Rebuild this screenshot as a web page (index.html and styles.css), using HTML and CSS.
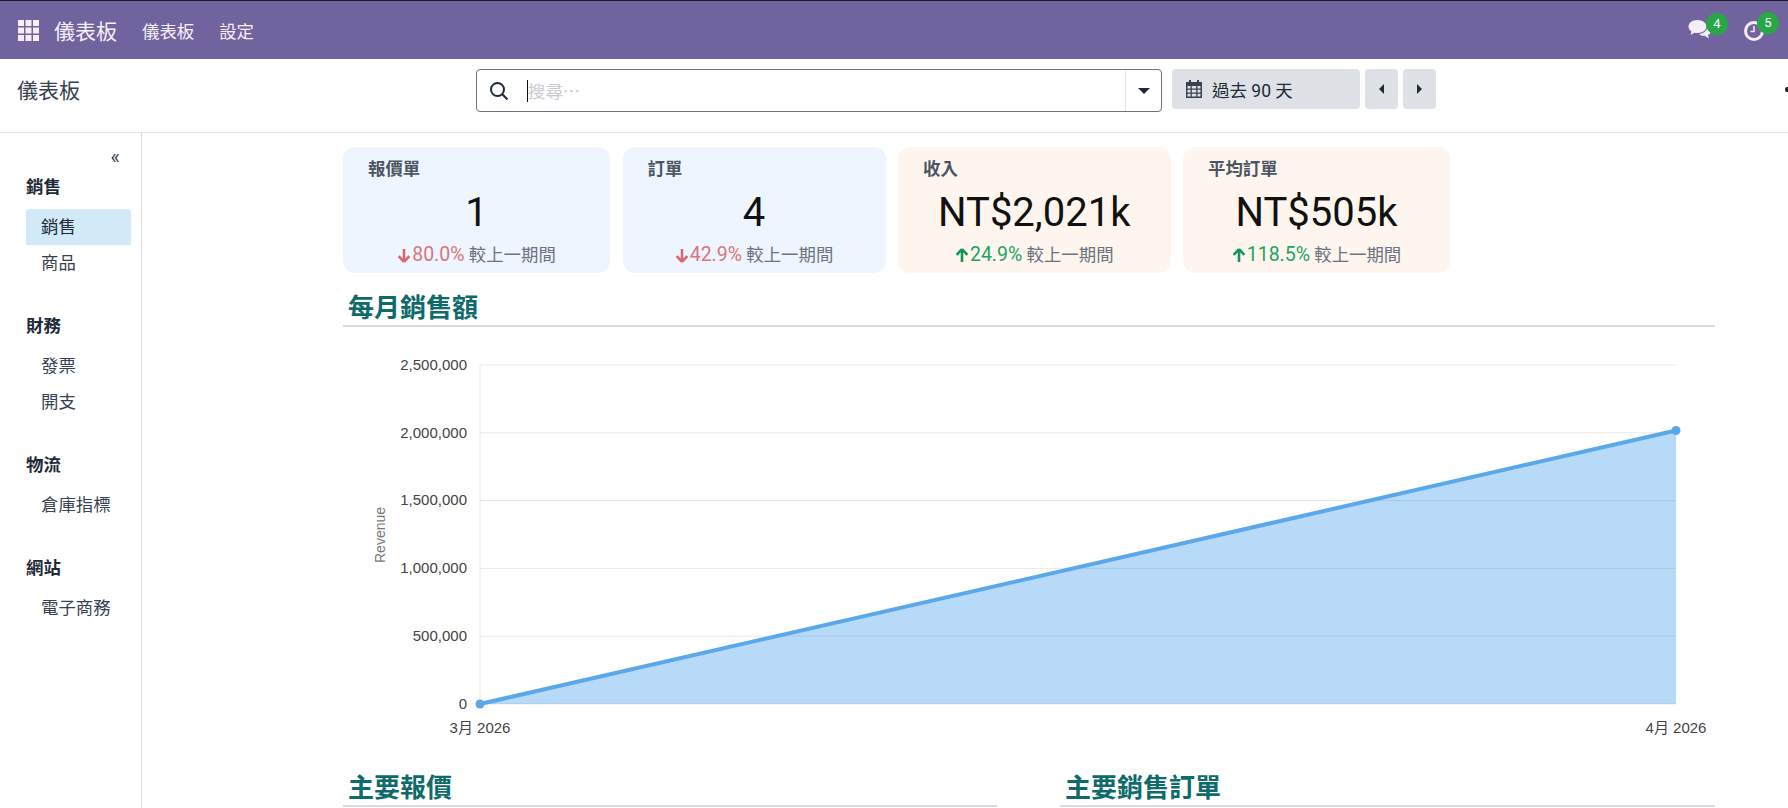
FILE: index.html
```html
<!DOCTYPE html>
<html lang="zh-Hant">
<head>
    <meta charset="UTF-8">
    <meta name="viewport" content="width=device-width, initial-scale=1.0">
    <title>儀表板</title>
    <link rel="stylesheet" href="styles.css">
</head>
<body>
    <header class="navbar">
        <svg class="apps-icon" viewBox="0 0 21 21">
            <path d="M0 0h6v6H0zM7.500 0h6v6h-6zM15 0h6v6h-6zM0 7.500h6v6H0zM7.500 7.500h6v6h-6zM15 7.500h6v6h-6zM0 15h6v6H0zM7.500 15h6v6h-6zM15 15h6v6h-6z"/>
        </svg>
        <span class="brand">儀表板</span>
        <a class="nav-link">儀表板</a>
        <a class="nav-link">設定</a>
        <div class="systray">
            <div class="tray-item tray-chat">
                <svg class="chat-icon" viewBox="0 0 24 19">
                    <path d="M9.500 0C4.500 0 .5 2.800.5 6.500c0 2 1.200 3.800 3 5L2.500 15l4-2.300c1 .2 2 .3 3 .3 5 0 9-2.900 9-6.500S14.500 0 9.500 0z"/>
                    <path d="M19.500 6.500c0 4-3.800 7-8.600 7.400 1.500 1.300 3.600 2 5.800 1.900L21 18.500l-1-3.500c2-1 3.500-2.700 3.500-4.700 0-1.600-1.500-3-4-3.800z"/>
                </svg>
                <span class="tray-badge">4</span>
            </div>
            <div class="tray-item tray-clock">
                <svg class="clock-icon" viewBox="0 0 22 22">
                    <circle cx="11" cy="11" r="8.500"/>
                    <path d="M11 6v5.500H7.500"/>
                </svg>
                <span class="tray-badge">5</span>
            </div>
        </div>
    </header>

    <div class="control-panel">
        <div class="page-title">儀表板</div>
        <div class="search-box">
            <svg class="search-icon" viewBox="0 0 20 20">
                <circle cx="8.500" cy="8.500" r="6.500"/>
                <path d="M13.300 13.300 18.500 18.500"/>
            </svg>
            <span class="search-cursor"></span>
            <span class="search-placeholder">搜尋⋯</span>
            <span class="search-toggle"><i class="caret-down"></i></span>
        </div>
        <button class="period-button">
            <svg class="calendar-icon" viewBox="0 0 16 18">
                <path d="M3 0h2v2h6V0h2v2h3v16H0V2h3zM1.500 6v2.500h3V6zm4.300 0v2.500h4.400V6zm5.700 0v2.500h3V6zM1.500 9.700v2.800h3V9.700zm4.300 0v2.800h4.400V9.700zm5.700 0v2.800h3V9.700zm-10 4v2.800h3v-2.800zm4.300 0v2.800h4.400v-2.800zm5.700 0v2.800h3v-2.800z"/>
            </svg>
            過去 90 天
        </button>
        <button class="arrow-button"><i class="caret-left"></i></button>
        <button class="arrow-button"><i class="caret-right"></i></button>
        <span class="panel-dot"></span>
    </div>

    <div class="main">
        <aside class="sidebar">
            <div class="collapse-toggle">«</div>
            <div class="side-group">
                <div class="side-heading">銷售</div>
                <div class="side-item active">銷售</div>
                <div class="side-item">商品</div>
            </div>
            <div class="side-group">
                <div class="side-heading">財務</div>
                <div class="side-item">發票</div>
                <div class="side-item">開支</div>
            </div>
            <div class="side-group">
                <div class="side-heading">物流</div>
                <div class="side-item">倉庫指標</div>
            </div>
            <div class="side-group">
                <div class="side-heading">網站</div>
                <div class="side-item">電子商務</div>
            </div>
        </aside>

        <main class="content">
            <div class="kpi-row">
                <div class="kpi-card blue">
                    <div class="kpi-label">報價單</div>
                    <div class="kpi-value">1</div>
                    <div class="kpi-delta">
                        <span class="down"><svg class="delta-arrow" viewBox="0 0 12 14"><path d="M6 13 1 7.500M6 13l5-5.500M6 13V1"/></svg>80.0%</span> 較上一期間
                    </div>
                </div>
                <div class="kpi-card blue">
                    <div class="kpi-label">訂單</div>
                    <div class="kpi-value">4</div>
                    <div class="kpi-delta">
                        <span class="down"><svg class="delta-arrow" viewBox="0 0 12 14"><path d="M6 13 1 7.500M6 13l5-5.500M6 13V1"/></svg>42.9%</span> 較上一期間
                    </div>
                </div>
                <div class="kpi-card orange">
                    <div class="kpi-label">收入</div>
                    <div class="kpi-value">NT$2,021k</div>
                    <div class="kpi-delta">
                        <span class="up"><svg class="delta-arrow" viewBox="0 0 12 14"><path d="M6 1 1 6.500M6 1l5 5.500M6 1v12"/></svg>24.9%</span> 較上一期間
                    </div>
                </div>
                <div class="kpi-card orange">
                    <div class="kpi-label">平均訂單</div>
                    <div class="kpi-value">NT$505k</div>
                    <div class="kpi-delta">
                        <span class="up"><svg class="delta-arrow" viewBox="0 0 12 14"><path d="M6 1 1 6.500M6 1l5 5.500M6 1v12"/></svg>118.5%</span> 較上一期間
                    </div>
                </div>
            </div>

            <h2 class="section-title">每月銷售額</h2>

            <svg class="chart" viewBox="0 0 1370 430">
                <path class="chart-area" d="M137 377 1333 103.500V377Z"/>
                <path class="grid-lines" d="M137 38H1333M137 105.800H1333M137 173.600H1333M137 241.400H1333M137 309.200H1333M137 377H1333M137 38V377"/>
                <path class="chart-line" d="M137 377 1333 103.500"/>
                <circle class="chart-point" cx="137" cy="377" r="4.500"/>
                <circle class="chart-point" cx="1333" cy="103.500" r="4.500"/>
                <g class="y-labels">
                    <text x="124" y="43">2,500,000</text>
                    <text x="124" y="111">2,000,000</text>
                    <text x="124" y="178">1,500,000</text>
                    <text x="124" y="246">1,000,000</text>
                    <text x="124" y="314">500,000</text>
                    <text x="124" y="382">0</text>
                </g>
                <g class="x-labels">
                    <text x="137" y="406">3月 2026</text>
                    <text x="1333" y="406">4月 2026</text>
                </g>
                <text class="axis-title" transform="translate(42 208) rotate(-90)">Revenue</text>
            </svg>

            <div class="bottom-row">
                <h2 class="section-title">主要報價</h2>
                <h2 class="section-title">主要銷售訂單</h2>
            </div>
        </main>
    </div>
</body>
</html>
```

FILE: styles.css
```css
* {
    box-sizing: border-box;
}

html, body {
    height: 100%;
}

body {
    margin: 0;
    height: 808px;
    overflow: hidden;
    background-color: #fff;
    color: #374151;
    font-family: Roboto, "Noto Sans CJK TC", sans-serif;
    font-size: 17.400px;
}

/* top bar */
.navbar {
    display: flex;
    align-items: center;
    height: 59px;
    padding-left: 18px;
    background-color: #71639e;
    border-top: 1px solid #1d1a2c;
    color: #f3f0f8;
}

.apps-icon {
    width: 21px;
    height: 21px;
    fill: #f3eef8;
    margin-right: 15px;
}

.brand {
    font-size: 21px;
    margin-right: 25px;
}

.nav-link {
    margin-right: 25px;
}

.systray {
    display: flex;
    margin-left: auto;
}

.tray-item {
    position: relative;
    width: 24px;
    height: 20px;
}

.tray-chat {
    margin-right: 31px;
}

.tray-clock {
    margin-right: 21px;
}

.chat-icon {
    display: block;
    width: 24px;
    height: 19px;
    fill: #f3eef8;
}

.clock-icon {
    display: block;
    width: 22px;
    height: 22px;
    fill: none;
    stroke: #f3eef8;
    stroke-width: 3;
}

.clock-icon path {
    stroke-width: 1.500;
}

.tray-badge {
    position: absolute;
    top: -7px;
    left: 18px;
    width: 22px;
    height: 22px;
    border-radius: 50%;
    background-color: #28a745;
    color: #fff;
    font-size: 13px;
    line-height: 22px;
    text-align: center;
}

.tray-clock .tray-badge {
    top: -8px;
    left: 14px;
}

/* search row */
.control-panel {
    display: flex;
    align-items: flex-start;
    height: 74px;
    padding-top: 10px;
    border-bottom: 1px solid #e3e5e8;
}

.page-title {
    width: 476px;
    padding-left: 17px;
    font-size: 21px;
    line-height: 45px;
}

.search-box {
    display: flex;
    align-items: center;
    position: relative;
    width: 686px;
    height: 43px;
    border: 1px solid #6b7280;
    border-radius: 4px;
    padding-left: 12px;
}

.search-icon {
    width: 20px;
    height: 20px;
    fill: none;
    stroke: #1f2937;
    stroke-width: 2;
}

.search-cursor {
    width: 1px;
    height: 22px;
    margin-left: 18px;
    background-color: #111;
}

.search-placeholder {
    color: #c8ccd1;
}

.search-toggle {
    display: flex;
    align-items: center;
    justify-content: center;
    margin-left: auto;
    width: 36px;
    height: 100%;
    border-left: 1px solid #e5e7eb;
}

.caret-down, .caret-left, .caret-right {
    display: block;
    width: 0;
    height: 0;
    border-style: solid;
    border-color: transparent;
}

.caret-down {
    border-width: 6px 6px 0;
    border-top-color: #1f2937;
}

.caret-left {
    border-width: 5px 5px 5px 0;
    border-right-color: #1f2937;
}

.caret-right {
    border-width: 5px 0 5px 5px;
    border-left-color: #1f2937;
}

.period-button, .arrow-button {
    display: flex;
    align-items: center;
    height: 40px;
    border: none;
    border-radius: 4px;
    background-color: #dee2e6;
    color: #1f2937;
    font-family: inherit;
    font-size: 17.500px;
}

.period-button {
    width: 188px;
    margin-left: 10px;
    padding-left: 14px;
}

.calendar-icon {
    width: 16px;
    height: 18px;
    margin-right: 10px;
    fill: #374151;
}

.arrow-button {
    justify-content: center;
    width: 33px;
    margin-left: 5px;
    padding: 0;
}

.panel-dot {
    width: 3px;
    height: 5px;
    margin: 18px 0 0 auto;
    border-radius: 50% 0 0 50%;
    background-color: #222;
}

/* sidebar */
.main {
    display: flex;
    height: 675px;
}

.sidebar {
    flex: none;
    width: 142px;
    padding: 13px 10px 0 26px;
    border-right: 1px solid #d8dadd;
}

.collapse-toggle {
    height: 24px;
    padding-right: 11px;
    margin-bottom: 5px;
    font-size: 20px;
    line-height: 22px;
    text-align: right;
}

.side-group {
    margin-bottom: 33px;
}

.side-heading {
    height: 24px;
    margin-bottom: 10px;
    color: #1f2937;
    font-weight: 700;
    line-height: 24px;
}

.side-item {
    height: 36px;
    padding-left: 15px;
    line-height: 36px;
}

.side-item.active {
    width: 105px;
    border-radius: 4px 4px 0 0;
    background-color: #d2e9f7;
    color: #1f2937;
}

/* dashboard content */
.content {
    width: 1372px;
    margin-left: 201px;
    padding-top: 14px;
}

.kpi-row {
    display: grid;
    grid-template-columns: 267px 263px 272.500px 267px;
    column-gap: 12.500px;
}

.kpi-card {
    height: 126px;
    padding-top: 10px;
    border-radius: 12px;
    text-align: center;
}

.kpi-card.blue {
    background-color: #eef5fe;
}

.kpi-card.orange {
    background-color: #fef6ee;
}

.kpi-label {
    padding-left: 25px;
    color: #4b5563;
    font-weight: 600;
    line-height: 24px;
    text-align: left;
}

.kpi-value {
    margin-top: 6px;
    color: #111;
    font-size: 40px;
    line-height: 52px;
}

.kpi-delta {
    margin-top: 4px;
    color: #6b7280;
    line-height: 24px;
}

.down, .up {
    font-size: 19.500px;
}

.down {
    color: #d9777c;
}

.up {
    color: #1ea362;
}

.delta-arrow {
    width: 14px;
    height: 15px;
    margin-right: 1px;
    fill: none;
    stroke-width: 2.400;
    vertical-align: -2px;
}

.down .delta-arrow {
    stroke: #d9686c;
}

.up .delta-arrow {
    stroke: #12945a;
}

.section-title {
    margin: 0;
    height: 54px;
    padding: 19px 0 0 5px;
    border-bottom: 2px solid #d9dbe0;
    color: #0f6b6b;
    font-size: 26px;
    font-weight: 700;
    line-height: 33px;
}

/* chart */
.chart {
    display: block;
    width: 1370px;
    height: 430px;
}

.grid-lines {
    fill: none;
    stroke: rgba(0, 0, 0, 0.09);
    stroke-width: 1;
}

.chart-area {
    fill: #b8daf9;
}

.chart-line {
    fill: none;
    stroke: #5aa8ea;
    stroke-width: 4;
}

.chart-point {
    fill: #5aa8ea;
}

.y-labels text, .x-labels text {
    fill: #444;
    font-family: "Liberation Sans", "Noto Sans CJK TC", sans-serif;
    font-size: 15px;
}

.y-labels text {
    text-anchor: end;
}

.x-labels text {
    text-anchor: middle;
}

.axis-title {
    fill: #777;
    font-family: "Liberation Sans", sans-serif;
    font-size: 14px;
    text-anchor: middle;
}

.bottom-row {
    display: grid;
    grid-template-columns: 654px 655px;
    column-gap: 63px;
}

.bottom-row .section-title {
    height: 50px;
    padding-top: 15px;
}
```
